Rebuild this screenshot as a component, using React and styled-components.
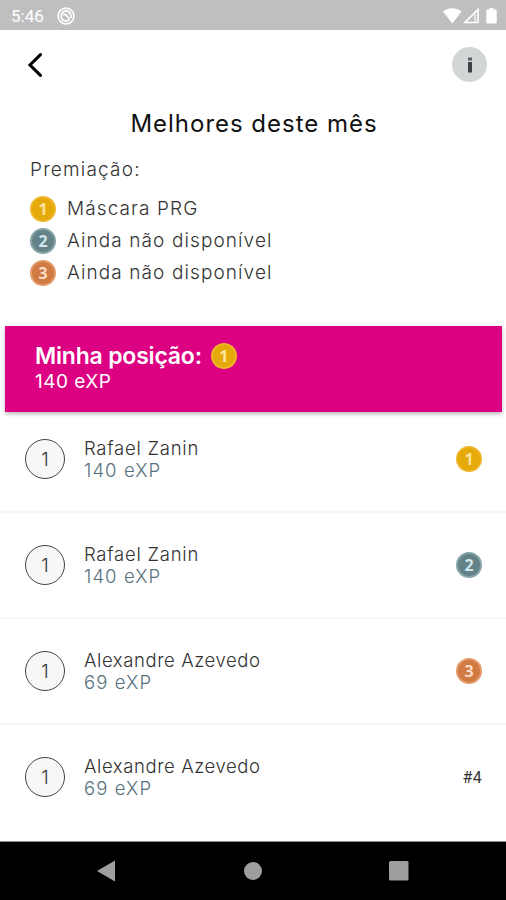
import React from "react";
import styled, { createGlobalStyle } from "styled-components";

const GlobalStyle = createGlobalStyle`
  * {
    box-sizing: border-box;
  }
  body {
    margin: 0;
    background-color: #fff;
    font-family: Inter, "Open Sans", sans-serif;
    color: #333;
  }
  svg {
    display: block;
  }
`;

const Screen = styled.div`
  display: flex;
  flex-direction: column;
  width: 506px;
  height: 900px;
  overflow: hidden;
`;

const StatusBar = styled.div`
  display: flex;
  align-items: center;
  flex: none;
  height: 30px;
  padding: 1px 9px 0 11px;
  background-color: #bfbfbf;
`;

const Clock = styled.span`
  width: 46px;
  font-family: Roboto, sans-serif;
  font-size: 17px;
  line-height: 20px;
  color: #fff;
`;

const StatusIcons = styled.div`
  display: flex;
  align-items: center;
  margin-left: auto;
`;

const Header = styled.div`
  display: flex;
  align-items: center;
  justify-content: space-between;
  flex: none;
  height: 69px;
  padding: 0 19px 0 27px;
`;

const IconButton = styled.button`
  padding: 0;
  border: none;
  background: none;
`;

const InfoButton = styled(IconButton)`
  display: flex;
  align-items: center;
  justify-content: center;
  width: 35px;
  height: 35px;
  border-radius: 50%;
  background-color: #d3d6d7;
`;

const Title = styled.h1`
  flex: none;
  margin: 10px 0 0;
  padding-left: 2px;
  text-align: center;
  font-size: 24px;
  font-weight: 400;
  line-height: 30px;
  letter-spacing: 0.98px;
  color: #111;
`;

const Awards = styled.div`
  flex: none;
  height: 186.5px;
  padding: 19px 30px 0;
`;

const AwardsTitle = styled.p`
  margin: 0 0 11px;
  font-size: 19px;
  font-weight: 300;
  line-height: 24px;
  letter-spacing: 1.2px;
`;

const Award = styled.div`
  display: flex;
  align-items: center;
  gap: 11px;
  height: 32px;
  font-size: 19px;
  font-weight: 300;
  line-height: 24px;
  letter-spacing: 1.1px;
`;

const MyPosition = styled.div`
  flex: none;
  height: 86px;
  margin: 0 4px 0 5px;
  padding: 16px 30px 0;
  background-color: #dc0082;
  color: #fff;
  box-shadow: 0 2px 4px rgba(0, 0, 0, 0.28);
`;

const MyPositionTitle = styled.div`
  display: flex;
  align-items: center;
  gap: 9px;
  height: 28px;
  font-size: 23px;
  font-weight: 600;
  letter-spacing: -0.2px;
`;

const MyPoints = styled.div`
  font-size: 19px;
  font-weight: 400;
  line-height: 24px;
  letter-spacing: 0.5px;
`;

const List = styled.div`
  flex: 1;
  min-height: 0;
  margin-top: -4.5px;
  overflow: hidden;
`;

const Row = styled.div`
  display: flex;
  align-items: center;
  height: 106px;
  padding: 0 24px 0 25px;
  border-bottom: 2px solid #f6f6f6;

  &:last-child {
    border-bottom-color: #fdfdfd;
  }
`;

const Avatar = styled.div`
  display: flex;
  align-items: center;
  justify-content: center;
  width: 40px;
  height: 40px;
  margin-right: 19px;
  border: 1.4px solid #444;
  border-radius: 50%;
  background-color: #f7f7f7;
  font-size: 19px;
  font-weight: 300;
`;

const Person = styled.div`
  flex: 1;
  font-size: 18.5px;
  font-weight: 300;
  line-height: 22px;
`;

const Name = styled.div`
  letter-spacing: ${(props) => props.$spacing}px;
`;

const Points = styled.div`
  letter-spacing: 1.1px;
  color: #54707c;
`;

const Place = styled.span`
  font-family: Roboto, sans-serif;
  font-size: 16px;
  letter-spacing: 0.3px;
`;

const NavBar = styled.div`
  display: flex;
  align-items: center;
  flex: none;
  height: 59px;
  padding: 0 97px;
  border-top: 1px solid #8a8a8a;
  justify-content: space-between;
  background-color: #000;
`;

const MedalCircle = styled.div`
  display: flex;
  align-items: center;
  justify-content: center;
  flex: none;
  width: 26px;
  height: 26px;
  border: 2px solid ${(props) => props.$rim};
  border-radius: 50%;
  background-color: ${(props) => props.$fill};
  color: ${(props) => props.$ink};
  font-family: "Noto Sans", sans-serif;
  font-size: 16px;
  font-weight: 700;
  line-height: 22px;
  letter-spacing: 0;
`;

const medals = {
  1: { rim: "#efb529", fill: "#e6a90a", ink: "#fbe3a0" },
  2: { rim: "#86a3a7", fill: "#638388", ink: "#d3e6e9" },
  3: { rim: "#e39a68", fill: "#d07b44", ink: "#fbdcc6" },
};

function Medal({ place }) {
  const { rim, fill, ink } = medals[place];
  return (
    <MedalCircle $rim={rim} $fill={fill} $ink={ink}>
      {place}
    </MedalCircle>
  );
}

const awards = [
  { place: 1, text: "Máscara PRG" },
  { place: 2, text: "Ainda não disponível" },
  { place: 3, text: "Ainda não disponível" },
];

const ranking = [
  { place: 1, name: "Rafael Zanin", points: 140, spacing: 0.75 },
  { place: 2, name: "Rafael Zanin", points: 140, spacing: 0.75 },
  { place: 3, name: "Alexandre Azevedo", points: 69, spacing: 0.58 },
  { place: 4, name: "Alexandre Azevedo", points: 69, spacing: 0.58 },
];

export default function App() {
  return (
    <Screen>
      <GlobalStyle />
      <StatusBar>
        <Clock>5:46</Clock>
        <svg width="18" height="18" viewBox="0 0 18 18" fill="none" stroke="#fff">
          <circle cx="9" cy="9" r="7.9" strokeWidth="1.6" />
          <path d="M12.6 12.4A5 5 0 1 1 14 9v2" strokeWidth="1.7" />
          <path d="M6 8.2c1.5-1.6 2.8-.8 3.6.3L12.4 12" strokeWidth="1.8" />
        </svg>
        <StatusIcons>
          <svg width="54" height="18" viewBox="0 0 54 18">
            <path d="M0 4.6C5.5.2 13 .2 18.5 4.6L9.3 16.5Z" fill="#fff" />
            <path
              d="M35 2.5V15.5H22Z"
              fill="none"
              stroke="#fff"
              strokeWidth="1.7"
            />
            <path d="M32 7v8" stroke="#fff" strokeWidth="1.2" />
            <path
              d="M46.500 1h4v1.500h2a1.200 1.200 0 0 1 1.200 1.200v11.600a1.200 1.200 0 0 1-1.200 1.200h-8a1.200 1.200 0 0 1-1.200-1.200V3.700a1.200 1.200 0 0 1 1.200-1.200h2Z"
              fill="#fff"
            />
          </svg>
        </StatusIcons>
      </StatusBar>
      <Header>
        <IconButton aria-label="Voltar">
          <svg width="16" height="26" viewBox="0 0 16 26">
            <path
              d="M13.500 2.600L3 13l10.500 10.400"
              fill="none"
              stroke="#000"
              strokeWidth="3"
              strokeLinecap="round"
            />
          </svg>
        </IconButton>
        <InfoButton aria-label="Informações">
          <svg width="4" height="16" viewBox="0 0 4 16">
            <rect width="4" height="3" y="0.5" fill="#5a5d61" />
            <rect width="4" height="10.5" y="5" fill="#3c4043" />
          </svg>
        </InfoButton>
      </Header>
      <Title>Melhores deste mês</Title>
      <Awards>
        <AwardsTitle>Premiação:</AwardsTitle>
        {awards.map((el) => (
          <Award key={el.place}>
            <Medal place={el.place} />
            {el.text}
          </Award>
        ))}
      </Awards>
      <MyPosition>
        <MyPositionTitle>
          Minha posição:
          <Medal place={1} />
        </MyPositionTitle>
        <MyPoints>140 eXP</MyPoints>
      </MyPosition>
      <List>
        {ranking.map((el) => (
          <Row key={el.place}>
            <Avatar>1</Avatar>
            <Person>
              <Name $spacing={el.spacing}>{el.name}</Name>
              <Points>{el.points} eXP</Points>
            </Person>
            {medals[el.place] ? (
              <Medal place={el.place} />
            ) : (
              <Place>#{el.place}</Place>
            )}
          </Row>
        ))}
      </List>
      <NavBar>
        <svg width="18" height="22" viewBox="0 0 18 22">
          <path d="M0 11L18 .5v21Z" fill="#9e9e9e" />
        </svg>
        <svg width="20" height="20" viewBox="0 0 20 20">
          <circle cx="11" cy="10" r="9" fill="#9e9e9e" />
        </svg>
        <svg width="20" height="20" viewBox="0 0 20 20">
          <rect width="19.5" height="19.5" rx="1.5" fill="#9e9e9e" />
        </svg>
      </NavBar>
    </Screen>
  );
}
